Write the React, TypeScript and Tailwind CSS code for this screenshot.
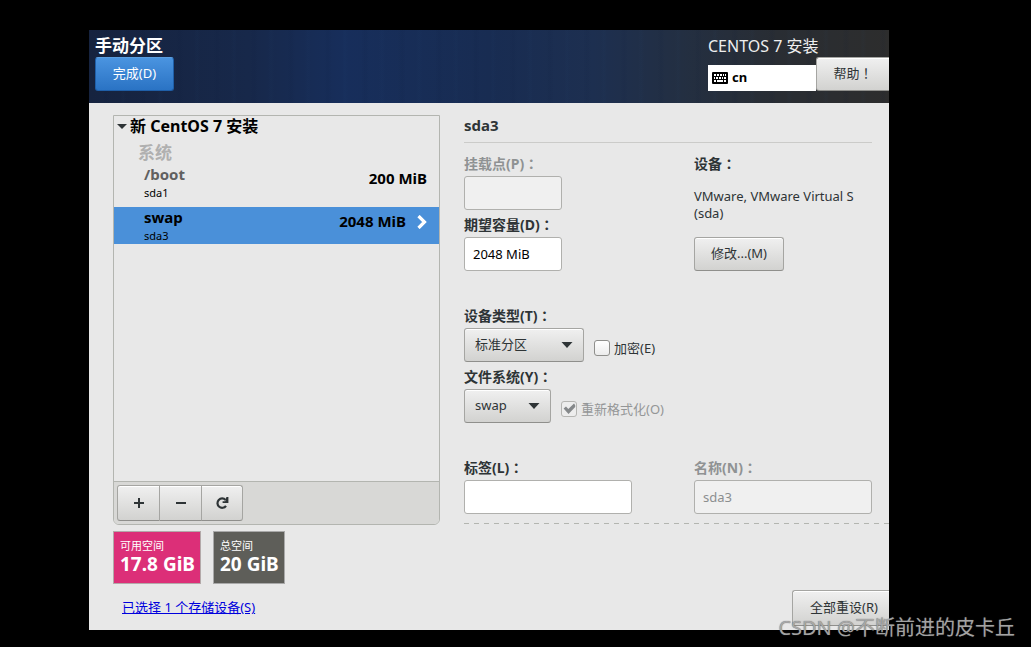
import React, { useState } from 'react';

interface Partition {
  id: string;
  name: string;
  device: string;
  size: string;
}

const PARTITIONS: Partition[] = [
  { id: 'boot', name: '/boot', device: 'sda1', size: '200 MiB' },
  { id: 'swap', name: 'swap', device: 'sda3', size: '2048 MiB' },
];

const BUTTON =
  'border border-[#a5a5a2] border-b-[#8f8f8c] bg-linear-to-b from-[#f0f0f0] to-[#d2d2d0] text-[13px] text-[#2e3436] shadow-[inset_0_1px_0_#ffffff]';
const INPUT =
  'block h-[34px] rounded-[3px] border border-[#b0b0ad] bg-white px-2 text-[13px] text-black disabled:bg-[#f0f0f0] disabled:text-[#8b8e8f]';
const LABEL = 'mb-0.5 block text-sm leading-5 font-bold text-[#2e3436]';
const LABEL_MUTED = 'mb-0.5 block text-sm leading-5 font-bold text-[#8f9293]';

// the TC face centres full-width punctuation in its cell
const Mark = ({ children }: { children: string }) => (
  <span className="font-['Noto_Sans_CJK_TC',sans-serif] leading-none">{children}</span>
);

const KeyboardIcon = () => (
  <svg width="16" height="12" viewBox="0 0 16 12" aria-hidden="true">
    <rect width="16" height="12" rx="1" fill="#000" />
    <path
      d="M2 2h2v2H2zM5 2h2v2H5zM8 2h2v2H8zM11 2h1v2h-1zM13 2h1v2h-1zM2 5h1v2H2zM4 5h2v2H4zM7 5h2v2H7zM10 5h1v2h-1zM12 5h2v2h-2zM2 8h2v2H2zM5 8h6v2H5zM12 8h2v2h-2z"
      fill="#fff"
    />
  </svg>
);

const ReloadIcon = () => (
  <svg width="14" height="14" viewBox="0 0 14 14" fill="none" aria-hidden="true">
    <path d="M10.6 3.9A4.7 4.7 0 1 0 11 9.8" stroke="#2e3436" strokeWidth="2.2" />
    <path d="M13.4 1v6H7.6V5.2h2.6L11.4 1z" fill="#2e3436" />
  </svg>
);

interface SelectFieldProps {
  id: string;
  options: string[];
  className: string;
}

const SelectField: React.FC<SelectFieldProps> = ({ id, options, className }) => (
  <div className={`relative ${className}`}>
    <select id={id} className={`${BUTTON} h-[34px] w-full appearance-none rounded-[3px] pr-7 pl-2.5`}>
      {options.map((option) => (
        <option key={option}>{option}</option>
      ))}
    </select>
    <svg className="pointer-events-none absolute top-3.5 right-[11px]" width="12" height="6" viewBox="0 0 12 6" aria-hidden="true">
      <path d="M.5 0h11L6 6z" fill="#2e3436" />
    </svg>
  </div>
);

interface CheckFieldProps {
  label: string;
  defaultChecked?: boolean;
  disabled?: boolean;
}

const CheckField: React.FC<CheckFieldProps> = ({ label, defaultChecked, disabled }) => (
  <label className={`mt-1.5 flex items-center gap-1 text-[13px] leading-5 ${disabled ? 'text-[#949697]' : 'text-[#2e3436]'}`}>
    <span className="relative">
      <input
        type="checkbox"
        defaultChecked={defaultChecked}
        disabled={disabled}
        className="peer block size-4 appearance-none rounded-[3px] border border-[#8f8f8c] bg-linear-to-b from-white to-[#ececec] disabled:border-[#b5b5b2] disabled:from-[#ededed] disabled:to-[#ededed]"
      />
      <svg className="pointer-events-none absolute inset-0 hidden peer-checked:block" width="16" height="16" viewBox="0 0 16 16" aria-hidden="true">
        <path d="M2.6 7.6 5 5.4l2.3 2.7L13 2.6l1.2 1.6v1.7L7.5 13z" fill="#85888a" />
      </svg>
    </span>
    {label}
  </label>
);

const Header = () => (
  <header className="flex h-[73px] justify-between bg-[repeating-linear-gradient(90deg,transparent_0px,transparent_13px,#0a183814_17px,transparent_21px,transparent_31px,#2852800c_34px,transparent_37px),linear-gradient(90deg,#16233f_0%,#17284a_20%,#172e5b_32%,#182c52_50%,#1d2f50_63%,#232f42_74%,#292d33_86%,#2d2d2d_100%)]">
    <div className="pt-1.5 pl-1.5">
      <h1 className="text-[17px] leading-5 font-bold text-white">手动分区</h1>
      <button
        type="button"
        className="mt-px h-[34px] w-[79px] rounded-[3px] border border-[#1f5fa8] border-t-[#5a9fe2] bg-linear-to-b from-[#4a94e0] to-[#2a73c4] text-[13px] text-white"
      >
        完成(D)
      </button>
    </div>
    <div className="w-[181px] pt-1.5">
      <p className="text-base leading-5 text-[#eeeeee]">CENTOS 7 安装</p>
      <div className="mt-px flex items-end">
        <div className="flex h-[26px] flex-1 items-center gap-1 bg-white pl-1 text-[13px] font-bold text-black">
          <KeyboardIcon />
          cn
        </div>
        <button type="button" className={`${BUTTON} h-[34px] w-[73px] rounded-l-[3px] border-r-0`}>
          帮助<Mark>！</Mark>
        </button>
      </div>
    </div>
  </header>
);

const PartitionList = () => {
  const [selected, setSelected] = useState('swap');

  return (
    <section className="flex w-[327px] shrink-0 flex-col overflow-hidden rounded-b-md border border-[#b3b5b0]">
      <div className="flex-1 pb-2">
        <h2 className="flex items-center gap-[3px] pl-[3px] text-base leading-5 font-bold text-black">
          <svg width="10" height="5" viewBox="0 0 10 5" aria-hidden="true">
            <path d="M0 0h10L5 5z" fill="#2e3436" />
          </svg>
          新 CentOS 7 安装
        </h2>
        <h3 className="mt-[7px] mb-px pl-6 text-[17px] leading-5 font-bold text-[#b0b0b0]">系统</h3>
        <ul className="flex flex-col gap-1.5">
          {PARTITIONS.map((item) => {
            const active = item.id === selected;
            return (
              <li key={item.id}>
                <button
                  type="button"
                  onClick={() => setSelected(item.id)}
                  className={`flex h-[37px] w-full items-start pr-3 pl-[30px] text-left text-black ${active ? 'bg-[#4a90d9]' : ''}`}
                >
                  <span className="flex-1">
                    <span className={`block text-[15px] leading-5 font-bold ${active ? '' : 'text-[#606060]'}`}>{item.name}</span>
                    <span className="block text-[11px] leading-[18px]">{item.device}</span>
                  </span>
                  <span className="text-[15px] leading-7 font-bold">{item.size}</span>
                  {active && (
                    <svg className="mt-2 ml-2.5" width="11" height="14" viewBox="0 0 11 14" fill="none" aria-hidden="true">
                      <path d="M2.5 1l6 6-6 6" stroke="#fff" strokeWidth="3.2" />
                    </svg>
                  )}
                </button>
              </li>
            );
          })}
        </ul>
      </div>
      <div className="flex border-t border-[#b3b5b0] bg-[#d8d8d6] p-[3px]">
        <button type="button" aria-label="添加" className={`${BUTTON} flex h-9 w-[43px] items-center justify-center rounded-l-[3px]`}>
          <svg width="12" height="12" viewBox="0 0 12 12" aria-hidden="true">
            <path d="M5 1h2v4h4v2H7v4H5V7H1V5h4z" fill="#2e3436" />
          </svg>
        </button>
        <button type="button" aria-label="删除" className={`${BUTTON} flex h-9 w-[42px] items-center justify-center border-l-0`}>
          <svg width="12" height="12" viewBox="0 0 12 12" aria-hidden="true">
            <path d="M1 5h10v2H1z" fill="#2e3436" />
          </svg>
        </button>
        <button type="button" aria-label="重新载入" className={`${BUTTON} flex h-9 w-[41px] items-center justify-center rounded-r-[3px] border-l-0`}>
          <ReloadIcon />
        </button>
      </div>
    </section>
  );
};

const DeviceForm = () => (
  <section className="min-w-0 flex-1 pb-px">
    <h2 className="mr-[17px] mb-[11px] h-7 border-b border-[#cbcbc9] text-[15px] leading-5 font-bold text-[#2e3436]">sda3</h2>

    <div className="mr-[17px] grid grid-cols-[230px_1fr]">
      <div>
        <label htmlFor="mount" className={LABEL_MUTED}>挂载点(P)<Mark>：</Mark></label>
        <input id="mount" disabled className={`${INPUT} w-[98px]`} />
        <label htmlFor="capacity" className={`${LABEL} mt-[5px]`}>期望容量(D)<Mark>：</Mark></label>
        <input id="capacity" defaultValue="2048 MiB" className={`${INPUT} w-[98px]`} />
      </div>
      <div>
        <h3 className="text-sm leading-5 font-bold text-[#2e3436]">设备<Mark>：</Mark></h3>
        <p className="mt-3.5 text-[13px] leading-[17px] text-[#2e3436]">
          VMware, VMware Virtual S
          <br />
          (sda)
        </p>
        <button type="button" className={`${BUTTON} mt-[15px] h-[34px] w-[90px] rounded-[3px]`}>
          修改...(M)
        </button>
      </div>
    </div>

    <div className="mt-[35px]">
      <label htmlFor="device-type" className={LABEL}>设备类型(T)<Mark>：</Mark></label>
      <div className="flex items-center gap-2.5">
        <SelectField id="device-type" options={['标准分区', 'LVM']} className="w-[120px]" />
        <CheckField label="加密(E)" />
      </div>
      <label htmlFor="filesystem" className={`${LABEL} mt-[5px]`}>文件系统(Y)<Mark>：</Mark></label>
      <div className="flex items-center gap-2.5">
        <SelectField id="filesystem" options={['swap', 'xfs', 'ext4']} className="w-[87px]" />
        <CheckField label="重新格式化(O)" defaultChecked disabled />
      </div>
    </div>

    <div className="mt-[35px] mr-[17px] grid grid-cols-[230px_1fr]">
      <div>
        <label htmlFor="label" className={LABEL}>标签(L)<Mark>：</Mark></label>
        <input id="label" className={`${INPUT} w-[168px]`} />
      </div>
      <div>
        <label htmlFor="name" className={LABEL_MUTED}>名称(N)<Mark>：</Mark></label>
        <input id="name" defaultValue="sda3" disabled className={`${INPUT} w-full`} />
      </div>
    </div>

    <div className="mt-[9px] h-px bg-[repeating-linear-gradient(90deg,#b3b5b0_0px,#b3b5b0_5px,transparent_5px,transparent_10px)]" />
  </section>
);

export default function App() {
  return (
    <div className="relative min-h-screen bg-black pt-[30px] pr-[142px] pb-[17px] pl-[89px] font-['Noto_Sans','Noto_Sans_CJK_SC',sans-serif]">
      <Header />
      <main className="bg-[#e8e8e8] pt-3 pb-1 pl-6">
        <div className="flex gap-6">
          <PartitionList />
          <DeviceForm />
        </div>

        <div className="mt-1.5 flex gap-3 text-white">
          <div className="h-[53px] border border-[#b3a9a9] bg-[#dc2f78] pt-1.5 pr-[5px] pl-1.5">
            <p className="text-[11px] leading-4">可用空间</p>
            <p className="text-[19px] leading-5 font-bold">17.8 GiB</p>
          </div>
          <div className="h-[53px] border border-[#a9a9a9] bg-[#5e5e59] pt-1.5 pr-[5px] pl-1.5">
            <p className="text-[11px] leading-4">总空间</p>
            <p className="text-[19px] leading-5 font-bold">20 GiB</p>
          </div>
        </div>

        <footer className="mt-1.5 flex items-center justify-between pl-[9px]">
          <a href="#storage" className="text-[13px] text-[#0000dd] underline">
            已选择 1 个存储设备(S)
          </a>
          <button type="button" className={`${BUTTON} h-9 w-[97px] rounded-l-[3px] border-r-0 pl-1.5`}>
            全部重设(R)
          </button>
        </footer>
      </main>
      <p className="absolute right-4 bottom-1 text-xl leading-[30px] whitespace-nowrap text-[#b4b4b4]/85 [text-shadow:0_0_1px_#555555]">
        CSDN @不断前进的皮卡丘
      </p>
    </div>
  );
}
